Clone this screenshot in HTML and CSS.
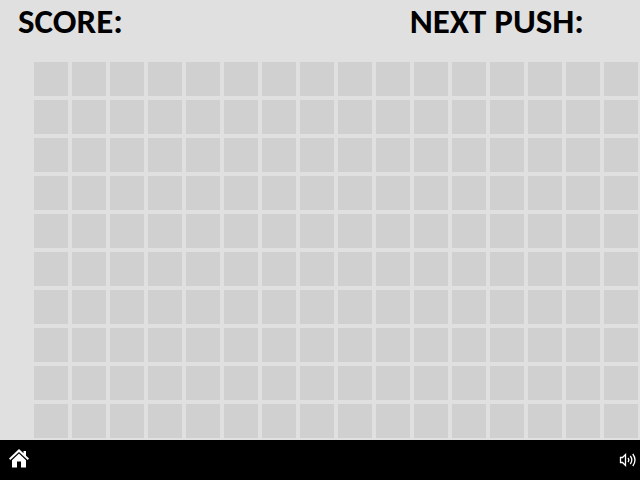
FILE: index.html
```html
<!DOCTYPE html>
<html lang="en">
<head>
<meta charset="utf-8">
<title>Push</title>
<link rel="stylesheet" href="styles.css">
</head>
<body>
<header class="status">
  <h1 class="label">SCORE:</h1>
  <h2 class="label">NEXT PUSH:</h2>
</header>
<main class="board" id="board"></main>
<footer class="toolbar">
  <button class="tool" type="button" aria-label="Home">
    <svg width="20" height="22" viewBox="0 0 20 22" fill="#fff">
      <path d="M10 0 14.5 4.3V2H17v4.7l3 2.9-1.3 1.5L10 2.9 1.3 11.1 0 9.6Z"/>
      <path d="M10 4.6 17 11.2V18.6h-5v-6H8v6H3v-7.4Z"/>
    </svg>
  </button>
  <button class="tool" type="button" aria-label="Sound">
    <svg width="18" height="16" viewBox="0 0 18 16" fill="none" stroke="#fff" stroke-width="1.3">
      <path d="M1.5 5.5H3.5L6.5 2.5V13.5L3.5 10.5H1.5Z"/>
      <path d="M9 6Q10.6 8 9 10M11.3 4Q14.3 8 11.3 12M13.8 2Q18.2 8 13.8 14"/>
    </svg>
  </button>
</footer>
<script src="board.js"></script>
</body>
</html>
```
FILE: styles.css
```css
* {
  box-sizing: border-box;
}

body {
  margin: 0;
  min-height: 100vh;
  display: flex;
  flex-direction: column;
  background: #e0e0e0;
  color: #000;
  font-family: Carlito, Lato, sans-serif;
}

.status {
  display: grid;
  grid-template-columns: 17fr 10fr;
  height: 62px;
  padding: 3px 0 0 18px;
}

.label {
  margin: 0;
  font-size: 35px;
  line-height: 36px;
  font-weight: 700;
  white-space: nowrap;
}

.board {
  flex: 1;
  display: grid;
  grid-template-columns: repeat(16, 34px);
  grid-auto-rows: 34px;
  gap: 4px;
  padding: 0 2px 2px 34px;
}

.cell {
  background: #d0d0d0;
}

.toolbar {
  display: flex;
  justify-content: space-between;
  align-items: center;
  height: 40px;
  padding: 0 3px 0 9px;
  background: #000;
}

.tool {
  display: flex;
  padding: 0;
  border: 0;
  background: none;
}
```
FILE: board.js
```js
const board = document.getElementById("board");
const COLUMNS = 16;
const ROWS = 10;

for (let i = 0; i < COLUMNS * ROWS; i++) {
  const cell = document.createElement("div");
  cell.className = "cell";
  board.append(cell);
}
```
